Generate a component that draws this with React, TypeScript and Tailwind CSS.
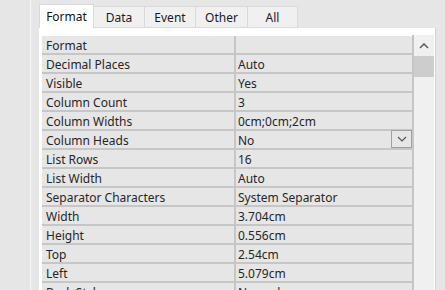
import React from "react";

const rows: [string, string][] = [
  ["Format", ""],
  ["Decimal Places", "Auto"],
  ["Visible", "Yes"],
  ["Column Count", "3"],
  ["Column Widths", "0cm;0cm;2cm"],
  ["Column Heads", "No"],
  ["List Rows", "16"],
  ["List Width", "Auto"],
  ["Separator Characters", "System Separator"],
  ["Width", "3.704cm"],
  ["Height", "0.556cm"],
  ["Top", "2.54cm"],
  ["Left", "5.079cm"],
  ["Back Style", "Normal"],
];

const tabs = [
  { name: "Format", w: "w-[55px]" },
  { name: "Data", w: "w-[51px]" },
  { name: "Event", w: "w-[51px]" },
  { name: "Other", w: "w-[52px]" },
  { name: "All", w: "w-[50px]" },
];

export default function App() {
  return (
    <div
      className="w-[445px] h-[290px] bg-[#e6e6e6] overflow-hidden flex text-[12px] text-[#262626]"
      style={{ fontFamily: '"Noto Sans", "Open Sans", sans-serif' }}
    >
      <div className="w-[30px] shrink-0" />
      <div className="w-[1px] shrink-0 bg-[#f7f7f7]" />
      <div className="w-[8px] shrink-0" />
      <div className="w-[397px] shrink-0 flex flex-col pt-[4px]">
        <div className="flex items-end h-[24px]">
          {tabs.map((t, i) =>
            i === 0 ? (
              <div
                key={t.name}
                className={`${t.w} h-[24px] bg-white border border-b-0 border-[#d9d9d9] flex items-center justify-center text-[#111] leading-none pt-[1px]`}
              >
                {t.name}
              </div>
            ) : (
              <div
                key={t.name}
                className={`${t.w} h-[22px] bg-[#f0f0f0] border border-l-0 border-[#d9d9d9] flex items-center justify-center text-[#1a1a1a] leading-none pt-[1px]`}
              >
                {t.name}
              </div>
            )
          )}
        </div>
        <div className="flex-1 bg-white border-r border-[#d4d4d4] pt-[8px] pl-[3px] pr-[1px] flex">
          <div className="w-[370px] shrink-0 flex flex-col">
            {rows.map(([label, value]) => (
              <div
                key={label}
                className="h-[19px] shrink-0 flex border-b-2 border-[#c6c6c6]"
              >
                <div className="w-[192px] h-[17px] shrink-0 bg-[#e6e6e6] pl-[4px] leading-[19px] whitespace-nowrap overflow-hidden">
                  {label}
                </div>
                <div className="w-[2px] shrink-0 bg-[#c6c6c6]" />
                <div className="flex-1 h-[17px] bg-[#e6e6e6] pl-[2px] leading-[19px] whitespace-nowrap flex">
                  <span className="flex-1 overflow-hidden">{value}</span>
                  {label === "Column Heads" && (
                    <div className="w-[21px] h-[18px] -mt-[1px] border border-[#a0a0a0] bg-[#e6e6e6] flex items-center justify-center">
                      <svg width="10" height="6" viewBox="0 0 10 6">
                        <path d="M1 1 L5 5 L9 1" fill="none" stroke="#555" strokeWidth="1.2" />
                      </svg>
                    </div>
                  )}
                </div>
              </div>
            ))}
          </div>
          <div className="w-[2px] shrink-0 bg-[#c6c6c6] -mt-[1px]" />
          <div className="w-[20px] shrink-0 bg-[#f0f0f0] flex flex-col -mt-[1px]">
            <div className="h-[21px] flex items-center justify-center">
              <svg width="10" height="6" viewBox="0 0 10 6">
                <path d="M1 5 L5 1 L9 5" fill="none" stroke="#606060" strokeWidth="1.6" />
              </svg>
            </div>
            <div className="h-[21px] bg-[#cdcdcd]" />
          </div>
        </div>
      </div>
    </div>
  );
}
